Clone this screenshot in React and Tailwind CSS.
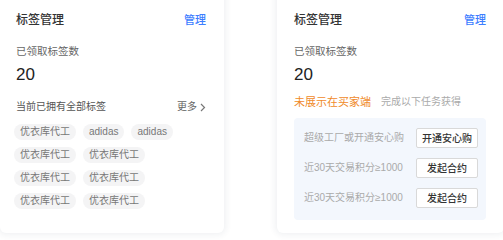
import React from "react";

const font = { fontFamily: '"Liberation Sans", "Noto Sans CJK SC", sans-serif' };

function Header() {
  return (
    <div className="flex items-center justify-between h-[16px]">
      <span className="text-[12px] leading-[16px] font-medium text-[#333]">标签管理</span>
      <span className="text-[11px] leading-[16px] font-medium text-[#3d7eff]">管理</span>
    </div>
  );
}

function Count() {
  return (
    <>
      <div className="mt-[16px] text-[10.5px] leading-[14px] text-[#666]">已领取标签数</div>
      <div className="mt-[7px] text-[17px] leading-[20px] text-[#222]">20</div>
    </>
  );
}

function Tag({ children }) {
  return (
    <span className="h-[16px] px-[6px] rounded-full bg-[#f4f4f5] text-[10px] leading-[16px] text-[#777] whitespace-nowrap">
      {children}
    </span>
  );
}

function TaskRow({ text, btn }) {
  return (
    <div className="flex items-center justify-between h-[20px]">
      <span className="text-[10px] leading-[14px] text-[#aaa]">{text}</span>
      <span className="w-[62px] h-[20px] flex items-center justify-center bg-white border border-[#d9d9d9] rounded-[2px] text-[10px] font-medium text-[#333]">
        {btn}
      </span>
    </div>
  );
}

export default function App() {
  return (
    <div className="w-[503px] h-[240px] overflow-hidden bg-white" style={font}>
      <div className="flex gap-[53px] -mt-[10px]">
        <div className="w-[224px] h-[243px] shrink-0 bg-white rounded-b-[6px] shadow-[0_0_6px_2px_rgba(40,50,90,0.07)] pl-[16px] pr-[18px] pt-[22px]">
          <Header />
          <Count />
          <div className="mt-[15px] flex items-center justify-between h-[14px]">
            <span className="text-[10px] leading-[14px] text-[#555]">当前已拥有全部标签</span>
            <span className="flex items-center gap-[3px] text-[10px] leading-[14px] text-[#666]">
              更多
              <svg width="6" height="9" viewBox="0 0 6 9" fill="none">
                <path d="M1 1l3.5 3.5L1 8" stroke="#777" strokeWidth="1.2" />
              </svg>
            </span>
          </div>
          <div className="mt-[10px] -ml-[2px] flex flex-wrap gap-x-[7px] gap-y-[7px] w-[180px]">
            <Tag>优衣库代工</Tag>
            <Tag>adidas</Tag>
            <Tag>adidas</Tag>
            <Tag>优衣库代工</Tag>
            <Tag>优衣库代工</Tag>
            <Tag>优衣库代工</Tag>
            <Tag>优衣库代工</Tag>
            <Tag>优衣库代工</Tag>
            <Tag>优衣库代工</Tag>
          </div>
        </div>
        <div className="w-[227px] h-[243px] shrink-0 bg-white rounded-b-[6px] shadow-[0_0_6px_2px_rgba(40,50,90,0.07)] pl-[17px] pr-[18px] pt-[22px]">
          <Header />
          <Count />
          <div className="mt-[10px] flex items-center h-[14px]">
            <span className="text-[11px] leading-[14px] text-[#f08a2a]">未展示在买家端</span>
            <span className="ml-[10px] text-[10px] leading-[14px] text-[#aaa]">完成以下任务获得</span>
          </div>
          <div className="mt-[9px] bg-[#f3f7fd] rounded-[4px] pl-[10px] pr-[8px] pt-[10px] pb-[12px] flex flex-col gap-[10px]">
            <TaskRow text="超级工厂或开通安心购" btn="开通安心购" />
            <TaskRow text="近30天交易积分≥1000" btn="发起合约" />
            <TaskRow text="近30天交易积分≥1000" btn="发起合约" />
          </div>
        </div>
      </div>
    </div>
  );
}
